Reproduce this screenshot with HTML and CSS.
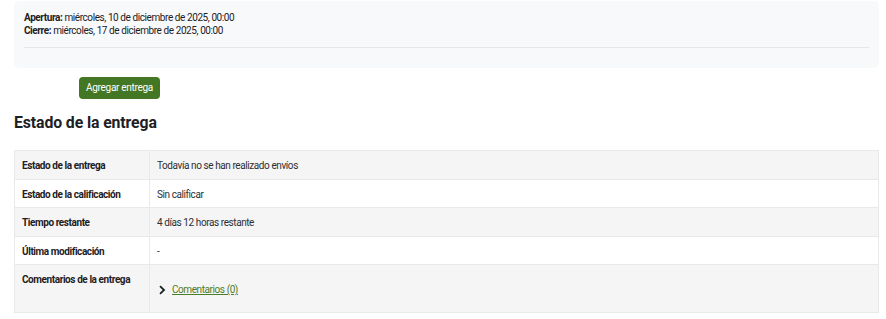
FILE: index.html
```html
<!DOCTYPE html>
<html lang="es">
<head>
<meta charset="utf-8">
<link rel="stylesheet" href="styles.css">
</head>
<body>
<div class="page">
  <div class="dates">
    <div class="date-line"><strong>Apertura:</strong> miércoles, 10 de diciembre de 2025, 00:00</div>
    <div class="date-line"><strong>Cierre:</strong> miércoles, 17 de diciembre de 2025, 00:00</div>
    <hr class="divider">
  </div>
  <div class="actions">
    <button class="btn">Agregar entrega</button>
  </div>
  <h2 class="title">Estado de la entrega</h2>
  <table class="status">
    <tr class="odd">
      <th>Estado de la entrega</th>
      <td>Todavía no se han realizado envíos</td>
    </tr>
    <tr>
      <th>Estado de la calificación</th>
      <td>Sin calificar</td>
    </tr>
    <tr class="odd">
      <th>Tiempo restante</th>
      <td>4 días 12 horas restante</td>
    </tr>
    <tr>
      <th>Última modificación</th>
      <td>-</td>
    </tr>
    <tr class="odd tall">
      <th>Comentarios de la entrega</th>
      <td>
        <div class="comments">
          <svg class="chev" width="8" height="10" viewBox="0 0 8 10"><path d="M2 1.2 L6 5 L2 8.8" fill="none" stroke="#1d2125" stroke-width="1.8"/></svg>
          <a href="#" class="link">Comentarios (0)</a>
        </div>
      </td>
    </tr>
  </table>
</div>
</body>
</html>
```
FILE: styles.css
```css
* { box-sizing: border-box; }
html, body { margin: 0; padding: 0; background: #fff; }
body {
  font-family: Roboto, "Liberation Sans", sans-serif;
  font-size: 10px;
  letter-spacing: -0.42px;
  color: #1d2125;
}
.page {
  padding: 1px 7px 0 14px;
}
.dates {
  background: #f8f9fa;
  border-radius: 5px;
  padding: 10px 10px 20px 10px;
  line-height: 13px;
}
.date-line strong { font-weight: 700; }
.divider {
  border: 0;
  border-top: 1px solid #e4e6e8;
  margin: 10px 0 0 0;
  height: 0;
}
.actions {
  padding: 9px 0 0 65px;
}
.btn {
  font-family: Roboto, "Liberation Sans", sans-serif;
  font-size: 10px;
  letter-spacing: -0.3px;
  line-height: 14px;
  color: #fff;
  background: #437723;
  border: 0;
  border-radius: 4px;
  padding: 4px 6px;
  width: 81px;
  height: 22px;
  white-space: nowrap;
}
.title {
  font-size: 15.8px;
  font-weight: 700;
  letter-spacing: -0.1px;
  line-height: 19px;
  margin: 14px 0 18px 0;
  color: #1d2125;
}
.status {
  width: 865px;
  border-collapse: collapse;
  border: 1px solid #e6e6e6;
}
.status th, .status td {
  border: 1px solid #e9e9e9;
  text-align: left;
  vertical-align: top;
  padding: 8px 7px 6px 7px;
  line-height: 13px;
  height: 28px;
}
.status tr.odd th, .status tr.odd td { height: 29px; }
.status th {
  width: 135px;
  font-weight: 700;
  white-space: nowrap;
}
.status td { color: #2b2f33; }
.status tr.odd { background: #f5f5f5; }
.status tr.tall th, .status tr.tall td { height: 48px; }
.comments {
  display: flex;
  align-items: center;
  gap: 6px;
  padding: 10px 0 0 1px;
}
.chev { display: block; }
.link {
  color: #4a7d2a;
  text-decoration: underline;
}
```
